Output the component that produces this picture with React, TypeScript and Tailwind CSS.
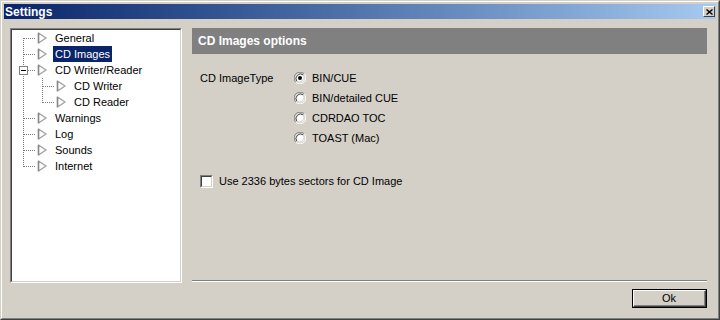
import React from "react";

const font = { fontFamily: '"Liberation Sans", Arial, sans-serif' };

type Node = { label: string; level: number; selected?: boolean };

const nodes: Node[] = [
  { label: "General", level: 0 },
  { label: "CD Images", level: 0, selected: true },
  { label: "CD Writer/Reader", level: 0 },
  { label: "CD Writer", level: 1 },
  { label: "CD Reader", level: 1 },
  { label: "Warnings", level: 0 },
  { label: "Log", level: 0 },
  { label: "Sounds", level: 0 },
  { label: "Internet", level: 0 },
];

function PageIcon() {
  return (
    <svg width="10" height="12" viewBox="0 0 10 12" className="shrink-0">
      <polygon points="1.5,1 9,6 1.5,11" fill="#ffffff" stroke="#a4a4a4" strokeWidth="1.5" strokeLinejoin="round" />
      <line x1="1.5" y1="1" x2="1.5" y2="11" stroke="#888888" strokeWidth="1.3" />
    </svg>
  );
}

function TreeLines() {
  const dot = { stroke: "#808080", strokeDasharray: "1 1", strokeWidth: 1 };
  const top = [0, 1, 2, 5, 6, 7, 8];
  return (
    <svg className="absolute inset-0 pointer-events-none" width="168" height="251">
      <line x1="11.5" y1="8" x2="11.5" y2="137" {...dot} />
      {top.map((i) => (
        <line key={i} x1="12" y1={8.5 + 16 * i} x2="24" y2={8.5 + 16 * i} {...dot} />
      ))}
      <line x1="30.5" y1="48" x2="30.5" y2="73" {...dot} />
      <line x1="31" y1="56.5" x2="43" y2="56.5" {...dot} />
      <line x1="31" y1="72.5" x2="43" y2="72.5" {...dot} />
      <rect x="7.5" y="36.5" width="8" height="8" fill="#ffffff" stroke="#808080" />
      <line x1="9" y1="40.5" x2="14" y2="40.5" stroke="#000000" />
    </svg>
  );
}

function Radio({ checked }: { checked?: boolean }) {
  return (
    <svg width="12" height="12" viewBox="0 0 12 12" className="shrink-0">
      <path d="M10.2 1.8 A5.9 5.9 0 0 0 1.8 10.2" fill="none" stroke="#808080" strokeWidth="1" />
      <path d="M10.2 1.8 A5.9 5.9 0 0 1 1.8 10.2" fill="none" stroke="#ffffff" strokeWidth="1" />
      <circle cx="6" cy="6" r="4.6" fill="#ffffff" />
      <path d="M9.2 2.8 A4.6 4.6 0 0 0 2.8 9.2" fill="none" stroke="#404040" strokeWidth="1" />
      <path d="M9.2 2.8 A4.6 4.6 0 0 1 2.8 9.2" fill="none" stroke="#d4d0c8" strokeWidth="1" />
      {checked && <circle cx="6" cy="6" r="2" fill="#000000" />}
    </svg>
  );
}

export default function App() {
  return (
    <div className="w-[720px] h-[320px] bg-[#d4d0c8] border border-t-[#d4d0c8] border-l-[#d4d0c8] border-r-[#404040] border-b-[#404040] text-[11px] text-black" style={font}>
      <div className="h-full border border-t-white border-l-white border-r-[#808080] border-b-[#808080] p-[2px] flex flex-col">
        {/* title bar */}
        <div className="h-[15px] shrink-0 flex items-center justify-between pl-[1px] pr-[1px] bg-gradient-to-r from-[#0a246a] to-[#a6caf0]">
          <span className="text-white font-bold text-[12px] leading-none">Settings</span>
          <div className="w-[12px] h-[11px] bg-[#d4d0c8] border border-t-white border-l-white border-r-[#404040] border-b-[#404040] flex items-center justify-center">
            <svg width="7" height="6" viewBox="0 0 7 6">
              <path d="M0.5 0.5 L6.5 5.5 M6.5 0.5 L0.5 5.5" stroke="#000" strokeWidth="1.4" />
            </svg>
          </div>
        </div>

        {/* body */}
        <div className="flex pl-[6px] pt-[9px]">
          {/* tree */}
          <div className="w-[172px] h-[255px] shrink-0 border border-t-[#808080] border-l-[#808080] border-r-white border-b-white">
            <div className="h-full bg-white border border-t-[#404040] border-l-[#404040] border-r-[#d4d0c8] border-b-[#d4d0c8] relative">
              <TreeLines />
              <ul className="relative">
                {nodes.map((n) => (
                  <li key={n.label} className={`h-4 flex items-center ${n.level ? "pl-[44px]" : "pl-[25px]"}`}>
                    <PageIcon />
                    <span className={`ml-[6px] h-4 px-[2px] flex items-center ${n.selected ? "bg-[#0a246a] text-white" : ""}`}>
                      {n.label}
                    </span>
                  </li>
                ))}
              </ul>
            </div>
          </div>

          {/* options */}
          <div className="ml-[10px] w-[515px] h-[280px] flex flex-col">
            <div className="h-[26px] shrink-0 bg-[#808080] flex items-center pl-[6px] text-white font-bold text-[12px]">
              CD Images options
            </div>

            <div className="flex pl-[8px] pt-[14px]">
              <div className="w-[94px] h-[20px] flex items-center">CD ImageType</div>
              <div className="flex flex-col">
                {["BIN/CUE", "BIN/detailed CUE", "CDRDAO TOC", "TOAST (Mac)"].map((t, i) => (
                  <div key={t} className="h-[20px] flex items-center gap-[6px]">
                    <Radio checked={i === 0} />
                    <span>{t}</span>
                  </div>
                ))}
              </div>
            </div>

            <div className="flex items-center gap-[6px] pl-[8px] mt-[23px] h-[20px]">
              <div className="w-[13px] h-[13px] shrink-0 border border-t-[#808080] border-l-[#808080] border-r-white border-b-white">
                <div className="h-full bg-white border border-t-[#404040] border-l-[#404040] border-r-[#d4d0c8] border-b-[#d4d0c8]" />
              </div>
              <span>Use 2336 bytes sectors for CD Image</span>
            </div>

            <div className="mt-auto h-[2px] border-t border-t-[#808080] border-b border-b-white shrink-0" />
            <div className="flex justify-end mt-[7px]">
              <button className="w-[75px] h-[19px] border border-black bg-[#d4d0c8]">
                <div className="h-full border border-t-white border-l-white border-r-[#404040] border-b-[#404040] flex items-center justify-center">
                  <div className="h-full w-full border-r border-b border-r-[#808080] border-b-[#808080] flex items-center justify-center text-[11px]">
                    Ok
                  </div>
                </div>
              </button>
            </div>
          </div>
        </div>
      </div>
    </div>
  );
}
